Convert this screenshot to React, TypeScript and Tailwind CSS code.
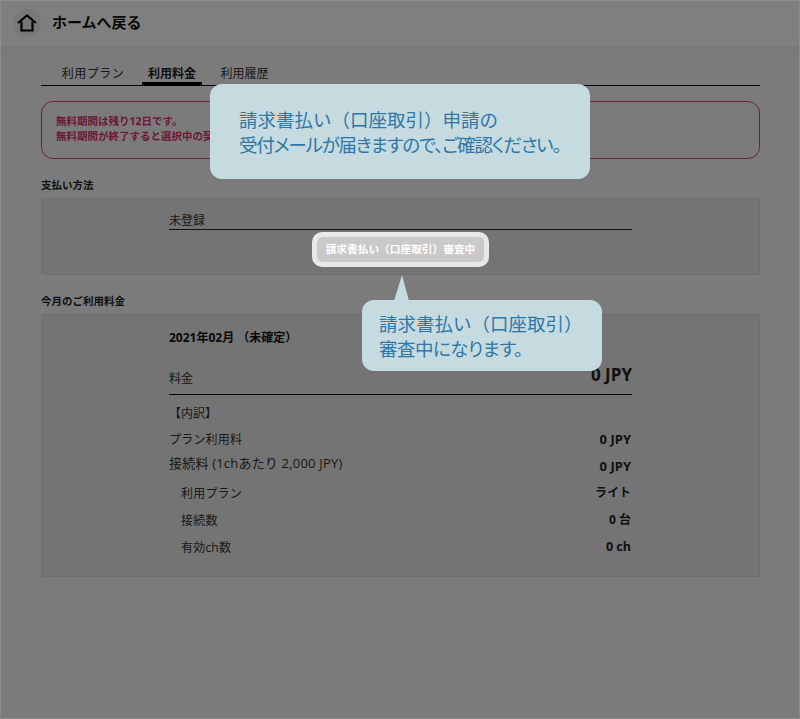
import React from "react";

function Row({ label, value, indent, mt, size }: { label: string; value: string; indent?: boolean; mt: string; size: string }) {
  return (
    <div className={`flex justify-between h-[18px] leading-[18px] ${mt} ${indent ? "pl-3" : ""}`}>
      <span className="text-[12px] text-[#333] tracking-[0.2px] leading-[20px]">{label}</span>
      <span className={`font-bold text-[#222] pr-[1px] ${size}`}>{value}</span>
    </div>
  );
}

export default function App() {
  return (
    <div className="relative w-[800px] h-[719px] overflow-hidden bg-[#f6f6f6] font-['Open_Sans','Noto_Sans_CJK_JP',sans-serif] text-[#222]">
      <header className="h-[46px] flex items-center pl-[13px] gap-[11px] bg-white shadow-[0_4px_10px_rgba(0,0,0,0.02)]">
        <div className="w-[28px] h-[28px] rounded-full bg-[#f0f0f0] flex items-center justify-center">
          <svg width="20" height="18" viewBox="0 0 20 18" fill="none" stroke="#000" strokeWidth="2.2">
            <path d="M1 9 L10 1.5 L19 9" />
            <path d="M4.5 7.5 V16.5 H15.5 V7.5" />
          </svg>
        </div>
        <span className="text-[15px] font-bold text-[#111] mt-[-2px]">ホームへ戻る</span>
      </header>

      <main className="pl-[41px] w-[760px]">
        <nav className="mt-[19px] h-[21px] flex border-b border-black">
          <div className="w-[101px] text-center text-[12px] leading-[18px] text-[#333] tracking-[0.5px] pl-[3px]">利用プラン</div>
          <div className="w-[60px] text-center text-[12px] leading-[18px] font-bold border-b-[3px] border-black h-[20px]">利用料金</div>
          <div className="w-[85px] text-center text-[12px] leading-[18px] text-[#333]">利用履歴</div>
        </nav>

        <div className="mt-[15px] h-[58px] border border-[#d9407f] rounded-[12px] pl-[14px] pt-[12px] text-[10.5px] leading-[15px] font-bold text-[#d6336c]">
          <p>無料期間は残り12日です。</p>
          <p>無料期間が終了すると選択中の契</p>
        </div>

        <h2 className="mt-[19px] text-[10.5px] leading-[14px] font-bold text-[#222]">支払い方法</h2>
        <section className="mt-[6px] h-[77px] bg-[#e8e8e8] border border-[#dcdcdc] rounded-[3px] pt-[12px]">
          <div className="ml-[127px] w-[463px] border-b border-[#222] h-[19px] text-[12px] leading-[20px] text-[#333]">未登録</div>
        </section>

        <h2 className="mt-[19px] text-[10.5px] leading-[14px] font-bold text-[#222]">今月のご利用料金</h2>
        <section className="mt-[6px] h-[263px] bg-[#e8e8e8] border border-[#dcdcdc] rounded-[3px] px-[127px] pt-[14px]">
          <div className="text-[12px] leading-[18px] font-bold text-[#111]">2021年02月 （未確定）</div>
          <div className="mt-[18px] h-[30px] border-b border-black flex justify-between items-center">
            <span className="text-[12px] text-[#333] mb-[2px]">料金</span>
            <span className="text-[17px] font-bold text-[#222] mt-[-10px]">0 JPY</span>
          </div>
          <div className="mt-[10px] text-[12px] leading-[18px] text-[#333]">【内訳】</div>
          <Row mt="mt-[7px]" size="text-[13px]" label="プラン利用料" value="0 JPY" />
          <div className="mt-[6px] flex justify-between items-start h-[18px]">
            <span className="text-[13px] leading-[18px] text-[#333] tracking-[0.2px]">接続料 (1chあたり 2,000 JPY)</span>
            <span className="text-[13px] leading-[18px] font-bold mt-[3px] pr-[1px]">0 JPY</span>
          </div>
          <Row mt="mt-[12px]" size="text-[12px]" indent label="利用プラン" value="ライト" />
          <Row mt="mt-[9px]" size="text-[12px]" indent label="接続数" value="0 台" />
          <Row mt="mt-[9px]" size="text-[12.5px]" indent label="有効ch数" value="0 ch" />
        </section>
      </main>

      <div className="absolute inset-0 bg-black/50 border border-[#8c8c8c]" />

      <div className="absolute left-[312px] top-[232px] w-[177px] h-[35px] border-[5px] border-[#e8e8e8] rounded-[10px] bg-[#c9c9c9] flex items-center justify-center text-[10.7px] font-bold text-white whitespace-nowrap">
        請求書払い（口座取引）審査中
      </div>

      <div className="absolute left-[210px] top-[84px] w-[380px] h-[95px] rounded-[12px] bg-[#c5dbe0] pl-[29px] pt-[23px] text-[18.5px] leading-[25px] text-[#2f77a8] whitespace-nowrap">
        <p>請求書払い（口座取引）申請の</p>
        <p className="[font-feature-settings:'palt'] tracking-[-1.2px]">受付メールが届きますので、ご確認ください。</p>
      </div>

      <div className="absolute left-[362px] top-[300px] w-[240px] h-[71px] rounded-[12px] bg-[#c5dbe0] pl-[17px] pt-[11px] text-[18.5px] leading-[25px] text-[#2f77a8] whitespace-nowrap">
        <svg className="absolute left-[32px] top-[-25px]" width="16" height="26" viewBox="0 0 16 26">
          <path d="M0 26 L8 0 L15 26 Z" fill="#c5dbe0" />
        </svg>
        <p>請求書払い（口座取引）</p>
        <p className="[font-feature-settings:'palt'] tracking-[-0.5px]">審査中になります。</p>
      </div>
    </div>
  );
}
